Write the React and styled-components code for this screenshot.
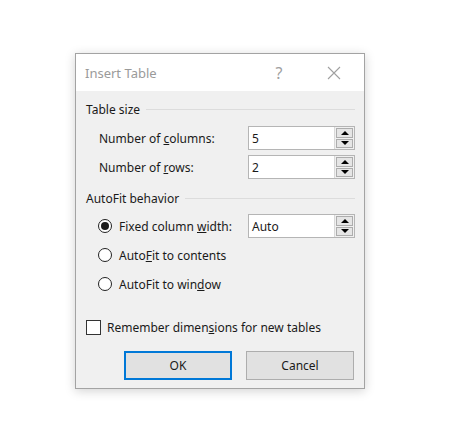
import React from "react";
import styled, { createGlobalStyle } from "styled-components";

// page basics
const GlobalStyle = createGlobalStyle`
  html, body {
    margin: 0;
    padding: 0;
    background: #ffffff;
  }
  body {
    font-family: "Noto Sans", "Liberation Sans", sans-serif;
    font-size: 12px;
    color: #1a1a1a;
  }
`;

const Page = styled.div`
  width: 449px;
  height: 432px;
  padding: 53px 0 0 75px;
  box-sizing: border-box;
`;

const Dialog = styled.div`
  width: 290px;
  box-sizing: border-box;
  border: 1px solid #a3a3a3;
  background: #f0f0f0;
  box-shadow: 0 2px 10px rgba(0, 0, 0, 0.18);
`;

// title bar
const TitleBar = styled.div`
  height: 37px;
  background: #ffffff;
  display: flex;
  align-items: center;
  padding: 0 5px 0 9px;
`;

const Title = styled.div`
  flex: 1;
  font-size: 13px;
  color: #9a9a9a;
`;

const TitleButton = styled.div`
  width: ${(p) => p.$w}px;
  display: flex;
  justify-content: center;
  align-items: center;
  color: #a0a0a0;
  font-size: 16px;
`;

// content
const Body = styled.div`
  padding: 10px 9px 8px 10px;
  display: flex;
  flex-direction: column;
`;

const GroupHeader = styled.div`
  display: flex;
  align-items: center;
  gap: 6px;
  height: 16px;
  margin-top: ${(p) => p.$top || 0}px;
  margin-bottom: ${(p) => p.$bottom}px;

  &::after {
    content: "";
    flex: 1;
    height: 1px;
    background: #dcdcdc;
  }
`;

const Row = styled.div`
  display: flex;
  align-items: center;
  height: 24px;
  padding-left: ${(p) => p.$indent}px;
  margin-top: ${(p) => p.$top || 0}px;
`;

const Label = styled.span`
  flex: 1;
  margin-left: ${(p) => p.$gap || 0}px;
`;

const SpinBox = styled.div`
  width: 107px;
  height: 24px;
  box-sizing: border-box;
  border: 1px solid #b5b5b5;
  background: #ffffff;
  display: flex;
`;

const SpinValue = styled.div`
  flex: 1;
  padding-left: 3px;
  display: flex;
  align-items: center;
`;

const SpinButtons = styled.div`
  width: 20px;
  background: #f0f0f0;
  border-left: 1px solid #d9d9d9;
  display: flex;
  flex-direction: column;
  gap: 1px;
  padding: 1px;
  box-sizing: border-box;
`;

const SpinButton = styled.div`
  flex: 1;
  border: 1px solid #adadad;
  background: #e5e5e5;
  display: flex;
  align-items: center;
  justify-content: center;
`;

const Arrow = styled.div`
  width: 0;
  height: 0;
  border-left: 4px solid transparent;
  border-right: 4px solid transparent;
  ${(p) =>
    p.$up
      ? "border-bottom: 4px solid #000;"
      : "border-top: 4px solid #000;"}
`;

const Radio = styled.div`
  width: 14px;
  height: 14px;
  box-sizing: border-box;
  border-radius: 50%;
  border: 1px solid #222;
  background: #ffffff;
  display: flex;
  align-items: center;
  justify-content: center;

  &::after {
    content: "";
    width: 8px;
    height: 8px;
    border-radius: 50%;
    background: ${(p) => (p.$checked ? "#1a1a1a" : "transparent")};
  }
`;

const Checkbox = styled.div`
  width: 15px;
  height: 15px;
  box-sizing: border-box;
  border: 1px solid #333;
  background: #ffffff;
`;

const ButtonRow = styled.div`
  display: flex;
  justify-content: flex-end;
  gap: 14px;
  margin-top: 12px;
  padding-right: 1px;
`;

const Button = styled.div`
  width: 108px;
  height: 29px;
  box-sizing: border-box;
  border: ${(p) => (p.$primary ? "2px solid #0078d7" : "1px solid #adadad")};
  background: #e1e1e1;
  display: flex;
  align-items: center;
  justify-content: center;
`;

const Spin = ({ value }) => (
  <SpinBox>
    <SpinValue>{value}</SpinValue>
    <SpinButtons>
      <SpinButton>
        <Arrow $up />
      </SpinButton>
      <SpinButton>
        <Arrow />
      </SpinButton>
    </SpinButtons>
  </SpinBox>
);

export default function App() {
  return (
    <>
      <GlobalStyle />
      <Page>
        <Dialog>
          <TitleBar>
            <Title>Insert Table</Title>
            <TitleButton $w={60}>?</TitleButton>
            <TitleButton $w={50}>
              <svg width="14" height="14" viewBox="0 0 14 14">
                <path d="M1 1 L13 13 M13 1 L1 13" stroke="#a0a0a0" strokeWidth="1.1" fill="none" />
              </svg>
            </TitleButton>
          </TitleBar>
          <Body>
            <GroupHeader $bottom={9}>Table size</GroupHeader>
            <Row $indent={13}>
              <Label>
                Number of <u>c</u>olumns:
              </Label>
              <Spin value="5" />
            </Row>
            <Row $indent={13} $top={5}>
              <Label>
                Number of <u>r</u>ows:
              </Label>
              <Spin value="2" />
            </Row>
            <GroupHeader $top={11} $bottom={8}>
              AutoFit behavior
            </GroupHeader>
            <Row $indent={12}>
              <Radio $checked />
              <Label $gap={7}>
                Fixed column <u>w</u>idth:
              </Label>
              <Spin value="Auto" />
            </Row>
            <Row $indent={12} $top={5}>
              <Radio />
              <Label $gap={7}>
                Auto<u>F</u>it to contents
              </Label>
            </Row>
            <Row $indent={12} $top={5}>
              <Radio />
              <Label $gap={7}>
                AutoFit to win<u>d</u>ow
              </Label>
            </Row>
            <Row $indent={0} $top={19}>
              <Checkbox />
              <Label $gap={6}>
                Remember dimen<u>s</u>ions for new tables
              </Label>
            </Row>
            <ButtonRow>
              <Button $primary>OK</Button>
              <Button>Cancel</Button>
            </ButtonRow>
          </Body>
        </Dialog>
      </Page>
    </>
  );
}
